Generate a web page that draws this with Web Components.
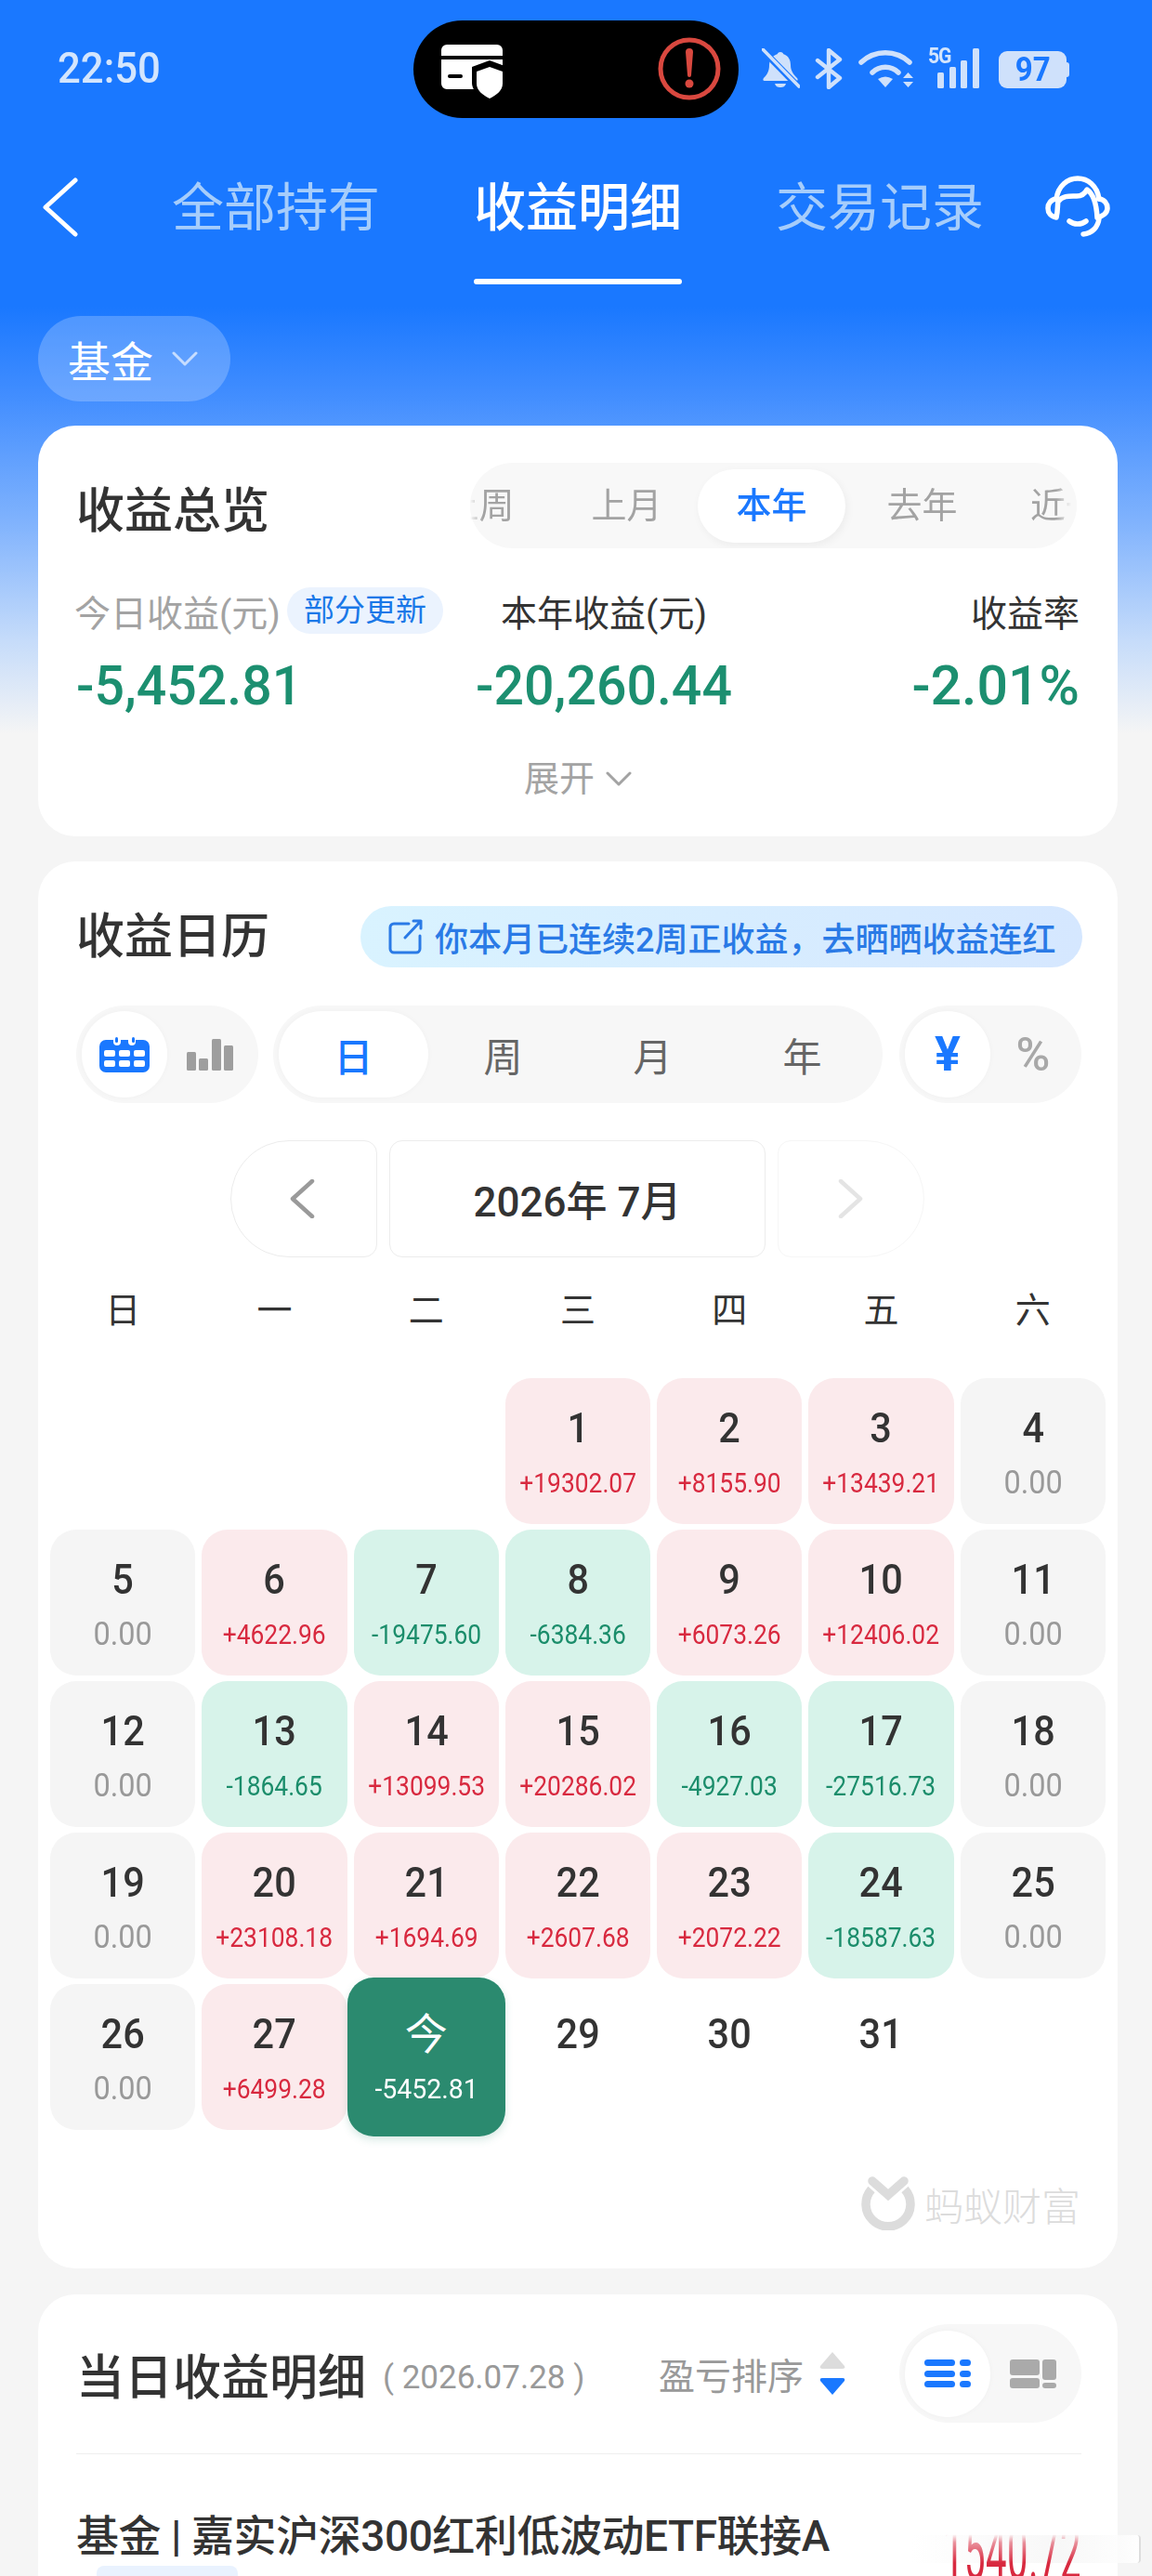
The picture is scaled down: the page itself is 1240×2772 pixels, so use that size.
<!DOCTYPE html>
<html lang="zh-CN">
<head>
<meta charset="UTF-8">
<title>收益明细</title>
<style>
  html, body { margin: 0; padding: 0; }
  body {
    width: 1240px; height: 2772px; overflow: hidden;
    font-family: Roboto, "Noto Sans CJK SC", sans-serif;
    color: #333;
    background: linear-gradient(180deg, #1a78ff 0, #1a78ff 330px, #3f8cff 420px, #7fb2fd 560px, #c6dcfa 690px, #f5f5f5 790px, #f5f5f5 100%);
  }
  main { display: block; padding: 0 37px 0 41px; }
  status-bar, top-nav { margin: 0 -37px 0 -41px; }
</style>
</head>
<body>
<main>
  <status-bar></status-bar>
  <top-nav></top-nav>
  <asset-pill>基金</asset-pill>
  <overview-card></overview-card>
  <calendar-card></calendar-card>
  <detail-card></detail-card>
</main>

<script>
// 状态栏
class StatusBar extends HTMLElement {
  connectedCallback() {
    this.attachShadow({mode: 'open'}).innerHTML = `
    <style>
      :host { display: flex; height: 130px; padding: 22px 0 0 62px; box-sizing: border-box; color: #d3e5fd; }
      .time { width: 383px; font-size: 47px; font-weight: 500; line-height: 47px; margin-top: 27px; color: #d3e5fd; transform: scaleX(.93); transform-origin: 0 0; }
      .island { width: 350px; height: 105px; border-radius: 53px; background: #000; flex: none; }
      .icons { display: flex; margin: 30px 0 0 25px; height: 45px; align-items: flex-start; }
      svg { display: block; flex: none; }
      .signal { position: relative; width: 56px; height: 43px; margin-left: 15px; }
      .signal span { position: absolute; left: 0; top: -1px; font-size: 23px; line-height: 20px; font-weight: 700; letter-spacing: -1.2px; transform: scaleX(.92); transform-origin: 0 0; }
      .battery { position: relative; width: 73px; height: 40px; margin: 3px 0 0 20px; border-radius: 9px; background: #cfe1fb; color: #1a78ff; font-size: 36px; font-weight: 700; line-height: 40px; text-align: center; }
      .battery span { display: inline-block; transform: scaleX(.92); }
      .battery::after { content: ""; position: absolute; left: 73px; top: 12px; width: 3px; height: 16px; border-radius: 0 3px 3px 0; background: #cfe1fb; }
    </style>
    <div class="time">22:50</div>
    <div class="island">
      <svg width="350" height="105" viewBox="0 0 350 105">
        <path d="M36 26h54a6 6 0 0 1 6 6v6H30v-6a6 6 0 0 1 6-6zM30 42h66v32H36a6 6 0 0 1-6-6z" fill="#fff"/>
        <rect x="37" y="58" width="16" height="4" rx="2" fill="#000"/>
        <path d="M82 44l19 7v17c0 9-8 15-19 20-11-5-19-11-19-20V51z" fill="#000" transform="translate(0 -1)"/>
        <path d="M82 50l14 5v13c0 7-6 12-14 16-8-4-14-9-14-16V55z" fill="#fff"/>
        <circle cx="297" cy="52" r="31" fill="none" stroke="#d9483f" stroke-width="5"/>
        <path d="M293 34a4 4 0 0 1 8 0l-2 25a2 2 0 0 1-4 0z" fill="#d9483f"/>
        <circle cx="297" cy="68" r="4.5" fill="#d9483f"/>
      </svg>
    </div>
    <div class="icons">
      <svg width="41" height="43" viewBox="0 0 41 43" fill="#cfe1fb">
        <path d="M20 4c2 0 3 1 3 2 6 2 8 7 8 12 0 6 3 10 7 14 1 1 1 3-1 3H3c-2 0-2-2-1-3 4-4 6-8 6-14 0-5 3-10 9-12 0-1 1-2 3-2z"/>
        <path d="M14 38h12c-1 3-3 4-6 4s-5-1-6-4z"/>
        <path d="M1 2l38 39" stroke="#1a78ff" stroke-width="7"/>
        <path d="M1 1l39 40" stroke="#cfe1fb" stroke-width="3.6" stroke-linecap="round"/>
      </svg>
      <svg width="30" height="44" viewBox="0 0 30 44" fill="none" stroke="#cfe1fb" stroke-width="4.4" stroke-linejoin="round" stroke-linecap="round" style="margin-left:16px">
        <path d="M3 13l24 19-12 10V2l12 10L3 31"/>
      </svg>
      <svg width="60" height="44" viewBox="0 0 60 44" fill="none" stroke="#cfe1fb" stroke-width="5.5" stroke-linecap="round" style="margin-left:17px">
        <path d="M3 15A38 38 0 0 1 55 15"/>
        <path d="M15 26A20 20 0 0 1 43 26"/>
        <path d="M21 33q8-5 16 0l-8 9z" fill="#cfe1fb" stroke="none"/>
        <path d="M48 32l5.500-6 5.500 6zM48 36l5.500 6 5.500-6z" fill="#cfe1fb" stroke="none"/>
      </svg>
      <div class="signal">
        <span>5G</span>
        <svg width="56" height="43" viewBox="0 0 56 43" fill="#cfe1fb">
          <rect x="10" y="26" width="7" height="17" rx="1.5"/>
          <rect x="23" y="20" width="7" height="23" rx="1.5"/>
          <rect x="35" y="13" width="7" height="30" rx="1.5"/>
          <rect x="48" y="0" width="7" height="43" rx="1.5"/>
        </svg>
      </div>
      <div class="battery"><span>97</span></div>
    </div>`;
  }
}
customElements.define('status-bar', StatusBar);

// 顶部导航
class TopNav extends HTMLElement {
  connectedCallback() {
    this.attachShadow({mode: 'open'}).innerHTML = `
    <style>
      :host { display: flex; height: 176px; padding-left: 45px; box-sizing: border-box; align-items: flex-start; }
      svg { display: block; flex: none; }
      .back { margin: 61px 100px 0 0; }
      .tabs { display: flex; gap: 101px; }
      .tab { width: 224px; margin-top: 62px; font-size: 56px; line-height: 64px; text-align: center; color: #a6cdfb; white-space: nowrap; }
      .tab.on { color: #fff; font-weight: 500; }
      .tab.on::after { content: ""; display: block; height: 6px; margin-top: 44px; border-radius: 3px; background: #fff; }
      .help { margin: 59px 0 0 66px; }
    </style>
    <svg class="back" width="40" height="64" viewBox="0 0 40 64" fill="none" stroke="#fff" stroke-width="5" stroke-linecap="round" stroke-linejoin="round"><path d="M36 3L4 32l32 29"/></svg>
    <div class="tabs">
      <div class="tab">全部持有</div>
      <div class="tab on">收益明细</div>
      <div class="tab">交易记录</div>
    </div>
    <svg class="help" width="70" height="66" viewBox="0 0 70 66" fill="none" stroke="#fff" stroke-width="5.5" stroke-linecap="round" stroke-linejoin="round">
      <path d="M12 25C14 11 24 3 35 3s21 8 23 22"/>
      <path d="M12 25c-6 1-9 5-9 10s3 9 9 10c2-8 1-14 2-17 5-7 13-6 20-6 5 0 9-3 11-7 6 4 10 12 11 30 6-1 11-5 11-10s-3-9-9-10"/>
      <path d="M26 49c5 4 13 4 18 0"/>
      <path d="M58 46c-1 9-7 16-17 17"/>
    </svg>`;
  }
}
customElements.define('top-nav', TopNav);

// 基金下拉
class AssetPill extends HTMLElement {
  connectedCallback() {
    this.attachShadow({mode: 'open'}).innerHTML = `
    <style>
      :host { display: flex; align-items: center; width: 207px; height: 92px; margin-top: 34px; padding-left: 32px; box-sizing: border-box; border-radius: 46px; background: rgba(255,255,255,.22); color: #fff; font-size: 46px; }
      svg { margin-left: 20px; }
    </style>
    <slot></slot>
    <svg width="28" height="16" viewBox="0 0 28 16" fill="none" stroke="#c6ddff" stroke-width="3" stroke-linecap="round" stroke-linejoin="round"><path d="M2 2l12 12L26 2"/></svg>`;
  }
}
customElements.define('asset-pill', AssetPill);

// 灰底切换组
class ToggleGroup extends HTMLElement {
  connectedCallback() {
    this.attachShadow({mode: 'open'}).innerHTML = `
    <style>
      :host { display: flex; align-items: center; height: 105px; padding: 0 6px; box-sizing: border-box; border-radius: 53px; background: #f7f7f7; flex: none; }
    </style>
    <slot></slot>`;
  }
}
customElements.define('toggle-group', ToggleGroup);

class ToggleItem extends HTMLElement {
  connectedCallback() {
    this.attachShadow({mode: 'open'}).innerHTML = `
    <style>
      :host { display: flex; align-items: center; justify-content: center; width: 92px; height: 93px; border-radius: 47px; color: #666; font-size: 42px; flex: none; }
      :host([on]) { background: #fff; color: #1a78ff; font-weight: 500; box-shadow: 0 0 6px rgba(0,0,0,.03); }
    </style>
    <slot></slot>`;
  }
}
customElements.define('toggle-item', ToggleItem);

// 收益总览
class OverviewCard extends HTMLElement {
  connectedCallback() {
    const periods = ['上周', '上月', '本年', '去年', '近一年'];
    this.attachShadow({mode: 'open'}).innerHTML = `
    <style>
      :host { display: block; height: 442px; margin-top: 26px; padding: 40px 41px 0; box-sizing: border-box; border-radius: 40px; background: #fff; }
      .head { display: flex; justify-content: space-between; align-items: center; margin-right: 3px; }
      h2 { margin: 14px 0 0; font-size: 52px; line-height: 72px; font-weight: 500; color: #333; }
      .seg { width: 653px; height: 92px; border-radius: 46px; background: #f8f8f8; }
      .clip { height: 92px; overflow: hidden;
              -webkit-mask-image: linear-gradient(90deg, transparent 0, #000 14px, #000 calc(100% - 22px), transparent calc(100% - 6px)); }
      .list { display: flex; align-items: center; height: 92px; margin-left: -70px; }
      .list div { width: 159px; height: 79px; line-height: 79px; flex: none; text-align: center; font-size: 38px; color: #a3a3a3; border-radius: 40px; white-space: nowrap; }
      .list .on { background: #fff; color: #1a78ff; font-weight: 500; box-shadow: 2px 3px 10px rgba(0,0,0,.05); margin-left: -3px; margin-right: 3px; }
      .list .last { padding-left: 37px; text-align: left; box-sizing: border-box; }
      .stats { display: grid; grid-template-columns: 418px 300px 1fr; margin-top: 42px; }
      .label { display: flex; align-items: center; height: 50px; font-size: 39px; color: #333; white-space: nowrap; }
      .label.muted { color: #a3a3a3; margin-left: -2px; }
      .mid { justify-content: center; }
      .end { justify-content: flex-end; }
      .tag { height: 50px; margin-left: 7px; padding: 0 18px; border-radius: 25px; background: #ebf3fe; color: #1a78e8; font-size: 33px; line-height: 50px; }
      .val { margin-top: 26px; height: 60px; font-size: 59px; line-height: 60px; font-weight: 500; color: #1c8f70; white-space: nowrap; }
      .more { display: flex; align-items: center; justify-content: center; gap: 12px; margin-top: 45px; font-size: 38px; line-height: 50px; color: #a3a3a3; }
    </style>
    <div class="head">
      <h2>收益总览</h2>
      <div class="seg"><div class="clip"><div class="list">
        ${periods.map(p => `<div class="${p == '本年' ? 'on' : p == '近一年' ? 'last' : ''}">${p}</div>`).join('')}
      </div></div></div>
    </div>
    <div class="stats">
      <div class="label muted">今日收益(元)<span class="tag">部分更新</span></div>
      <div class="label mid">本年收益(元)</div>
      <div class="label end">收益率</div>
      <div class="val" style="transform:scaleX(.97);transform-origin:0 0">-5,452.81</div>
      <div class="val" style="text-align:center;transform:scaleX(.97)">-20,260.44</div>
      <div class="val" style="text-align:right">-2.01%</div>
    </div>
    <div class="more">展开<svg width="28" height="16" viewBox="0 0 28 16" fill="none" stroke="#a3a3a3" stroke-width="3" stroke-linecap="round" stroke-linejoin="round"><path d="M2 2l12 12L26 2"/></svg></div>`;
  }
}
customElements.define('overview-card', OverviewCard);

// 日历格子
class DayCell extends HTMLElement {
  connectedCallback() {
    const day = this.getAttribute('day');
    const amount = this.getAttribute('amount');
    this.attachShadow({mode: 'open'}).innerHTML = `
    <style>
      :host { display: block; height: 157px; border-radius: 28px; text-align: center; color: #333; box-sizing: border-box; padding-top: 32px; }
      .num { font-size: 45px; line-height: 44px; font-weight: 500; transform: scaleX(.92); }
      .amt { margin-top: 17px; font-size: 30px; line-height: 40px; white-space: nowrap; transform: scaleX(.88); }
      :host([kind=up]) { background: #fbeaec; }
      :host([kind=up]) .amt { color: #d8293f; }
      :host([kind=down]) { background: #d7f3ea; }
      :host([kind=down]) .amt { color: #1b8d6b; }
      :host([kind=flat]) { background: #f5f5f5; }
      :host([kind=flat]) .amt { color: #999; font-size: 35px; transform: scaleX(.93); }
      :host([kind=today]) { margin: -7px; height: 171px; padding-top: 39px; background: #2b8a6f; color: #fff; box-shadow: 0 4px 8px rgba(43,138,111,.18); position: relative; z-index: 1; }
      :host([kind=today]) .num { font-weight: 400; font-size: 46px; transform: none; }
      :host([kind=today]) .amt { transform: scaleX(.95); }
    </style>
    <div class="num">${day}</div>
    ${amount ? `<div class="amt">${amount}</div>` : ''}`;
  }
}
customElements.define('day-cell', DayCell);

// 蚂蚁财富水印
class AntLogo extends HTMLElement {
  connectedCallback() {
    this.attachShadow({mode: 'open'}).innerHTML = `
    <style>
      :host { display: flex; align-items: center; justify-content: flex-end; gap: 10px; height: 58px; color: #dcdcdc; font-size: 42px; font-weight: 300; }
      svg { display: block; }
    </style>
    <svg width="58" height="58" viewBox="0 0 58 58" fill="none" stroke="#dcdcdc" stroke-width="9.5">
      <path d="M11 14A24 24 0 1 0 47 14"/>
      <path d="M12 5l17 15L46 5" stroke-linecap="round"/>
    </svg>
    <span>蚂蚁财富</span>`;
  }
}
customElements.define('ant-logo', AntLogo);

// 收益日历
class CalendarCard extends HTMLElement {
  connectedCallback() {
    const days = [
      [], [], [],
      ['1', '+19302.07'], ['2', '+8155.90'], ['3', '+13439.21'], ['4', '0.00'],
      ['5', '0.00'], ['6', '+4622.96'], ['7', '-19475.60'], ['8', '-6384.36'], ['9', '+6073.26'], ['10', '+12406.02'], ['11', '0.00'],
      ['12', '0.00'], ['13', '-1864.65'], ['14', '+13099.53'], ['15', '+20286.02'], ['16', '-4927.03'], ['17', '-27516.73'], ['18', '0.00'],
      ['19', '0.00'], ['20', '+23108.18'], ['21', '+1694.69'], ['22', '+2607.68'], ['23', '+2072.22'], ['24', '-18587.63'], ['25', '0.00'],
      ['26', '0.00'], ['27', '+6499.28'], ['今', '-5452.81', 'today'], ['29'], ['30'], ['31']
    ];
    const kind = d => d[2] || (!d[1] ? '' : d[1] == '0.00' ? 'flat' : d[1][0] == '+' ? 'up' : 'down');
    this.attachShadow({mode: 'open'}).innerHTML = `
    <style>
      :host { display: block; height: 1514px; margin-top: 27px; padding-top: 48px; box-sizing: border-box; border-radius: 40px; background: #fff; }
      .head { display: flex; justify-content: space-between; align-items: center; padding: 0 38px 0 41px; height: 66px; }
      h2 { margin: -10px 0 0; font-size: 52px; font-weight: 500; color: #333; }
      .banner { display: flex; align-items: center; gap: 12px; height: 66px; padding: 0 28px 0 30px; box-sizing: border-box; width: 777px; border-radius: 33px; background: linear-gradient(90deg, #d9f3ff, #d5e7ff); color: #2a7ae6; font-size: 36px; font-weight: 500; white-space: nowrap; }
      .controls { display: flex; margin: 41px 0 0 41px; }
      .nav { display: flex; justify-content: flex-start; gap: 13px; margin: 40px 0 0 207px; height: 126px; }
      .nav div { box-sizing: border-box; border: 1.5px solid #ececec; height: 126px; border-radius: 14px; display: flex; align-items: center; justify-content: center; }
      .prev { width: 158px; border-radius: 63px 14px 14px 63px !important; justify-content: flex-start !important; padding-left: 62px; }
      .month { width: 405px; font-size: 44px; font-weight: 500; color: #333; }
      .next { width: 158px; border-radius: 14px 63px 63px 14px !important; border-color: #f6f6f6 !important; justify-content: flex-start !important; padding-left: 64px; }
      .week { display: grid; grid-template-columns: repeat(7, 1fr); gap: 7px; margin: 37px 13px 0; height: 40px; line-height: 40px; text-align: center; font-size: 38px; color: #333; }
      .grid { display: grid; grid-template-columns: repeat(7, 1fr); gap: 6px 7px; margin: 53px 13px 0; }
      ant-logo { margin: 50px 40px 0 0; }
      svg { display: block; flex: none; }
    </style>
    <div class="head">
      <h2>收益日历</h2>
      <div class="banner">
        <svg width="38" height="38" viewBox="0 0 38 38" fill="none" stroke="#2a7ae6" stroke-width="3" stroke-linecap="round" stroke-linejoin="round"><path d="M22 5H6a4 4 0 0 0-4 4v23a4 4 0 0 0 4 4h24a4 4 0 0 0 4-4V18M18 20L35 2M27 2h8v8"/></svg>
        <span>你本月已连续2周正收益，去晒晒收益连红</span>
      </div>
    </div>
    <div class="controls">
      <toggle-group>
        <toggle-item on>
          <svg width="54" height="38" viewBox="0 0 54 38"><path d="M7 3h8v2a4 4 0 0 0 8 0V3h8v2a4 4 0 0 0 8 0V3h8a7 7 0 0 1 7 7v21a7 7 0 0 1-7 7H7a7 7 0 0 1-7-7V10a7 7 0 0 1 7-7z" fill="#1a78ff"/><g fill="#fff"><rect x="5" y="14" width="12" height="7" rx="2"/><rect x="21" y="14" width="12" height="7" rx="2"/><rect x="37" y="14" width="12" height="7" rx="2"/><rect x="5" y="25" width="12" height="7" rx="2"/><rect x="21" y="25" width="12" height="7" rx="2"/><rect x="37" y="25" width="12" height="7" rx="2"/></g><rect x="17" y="0" width="3" height="6" rx="1.5" fill="#1a78ff"/><rect x="35" y="0" width="3" height="6" rx="1.5" fill="#1a78ff"/></svg>
        </toggle-item>
        <toggle-item>
          <svg width="50" height="34" viewBox="0 0 50 34" fill="#9e9e9e"><rect x="0" y="14" width="10" height="20" rx="1.5"/><rect x="13" y="21" width="10" height="13" rx="1.5"/><rect x="27" y="0" width="10" height="34" rx="1.5"/><rect x="40" y="7" width="10" height="27" rx="1.5"/></svg>
        </toggle-item>
      </toggle-group>
      <toggle-group style="margin-left:16px">
        <toggle-item on style="width:161px">日</toggle-item>
        <toggle-item style="width:161px">周</toggle-item>
        <toggle-item style="width:161px">月</toggle-item>
        <toggle-item style="width:161px">年</toggle-item>
      </toggle-group>
      <toggle-group style="margin-left:18px">
        <toggle-item on style="font-weight:700;font-size:52px">¥</toggle-item>
        <toggle-item style="color:#a8a8a8;font-weight:500;font-size:50px">%</toggle-item>
      </toggle-group>
    </div>
    <div class="nav">
      <div class="prev"><svg width="28" height="42" viewBox="0 0 28 42" fill="none" stroke="#9a9a9a" stroke-width="4.500" stroke-linecap="round" stroke-linejoin="round"><path d="M25 2L4 21l21 19"/></svg></div>
      <div class="month">2026年 7月</div>
      <div class="next"><svg width="28" height="42" viewBox="0 0 28 42" fill="none" stroke="#e4e4e4" stroke-width="4.500" stroke-linecap="round" stroke-linejoin="round"><path d="M3 2l21 19L3 40"/></svg></div>
    </div>
    <div class="week">${['日','一','二','三','四','五','六'].map(w => `<span>${w}</span>`).join('')}</div>
    <div class="grid">
      ${days.map(d => d.length ? `<day-cell day="${d[0]}" ${d[1] ? `amount="${d[1]}"` : ''} kind="${kind(d)}"></day-cell>` : '<span></span>').join('')}
    </div>
    <ant-logo></ant-logo>`;
  }
}
customElements.define('calendar-card', CalendarCard);

// 当日收益明细
class DetailCard extends HTMLElement {
  connectedCallback() {
    this.attachShadow({mode: 'open'}).innerHTML = `
    <style>
      :host { display: block; height: 340px; margin-top: 28px; padding: 32px 39px 0 41px; box-sizing: border-box; border-radius: 40px 40px 0 0; background: #fff; position: relative; }
      .head { display: flex; align-items: center; height: 106px; }
      h2 { margin: 0; font-size: 52px; font-weight: 500; color: #333; white-space: nowrap; }
      .date { margin: 8px 0 0 18px; width: 297px; font-size: 35px; color: #999; white-space: nowrap; }
      .sort { font-size: 39px; color: #999; white-space: nowrap; }
      .arrows { margin: 0 0 0 17px; }
      toggle-group { height: 106px; margin-left: auto; }
      hr { margin: 33px 0 0; border: 0; border-top: 1.5px solid #eee; }
      .name { margin-top: 58px; font-size: 46px; line-height: 60px; font-weight: 500; color: #333; white-space: nowrap; letter-spacing: -.45px; }
      .tag { width: 152px; height: 44px; margin: 2px 0 0 22px; border-radius: 8px; background: #e9f2fe; }
      .ghost { position: absolute; left: 939px; top: 259px; width: 248px; height: 30px; box-sizing: border-box; background: linear-gradient(90deg, rgba(255,255,255,0), rgba(238,238,238,.45) 65%, rgba(255,255,255,.9)); border-right: 2px solid #ddd; border-radius: 4px; }
      .profit { position: absolute; left: 974px; top: 223px; height: 50px; font-size: 40px; line-height: 50px; color: #d8293f; transform: scaleY(2.2); transform-origin: 0 0; letter-spacing: .5px;
                -webkit-mask-image: linear-gradient(180deg, transparent 32%, rgba(0,0,0,.5) 40%, #000 60%); }
      svg { display: block; flex: none; }
    </style>
    <div class="head">
      <h2>当日收益明细</h2>
      <span class="date">( 2026.07.28 )</span>
      <span class="sort">盈亏排序</span>
      <svg class="arrows" width="28" height="46" viewBox="0 0 28 46"><path d="M14 0l13 15q1 3-2 3H3q-3 0-2-3z" fill="#dcdcdc"/><path d="M14 46L1 31q-1-3 2-3h22q3 0 2 3z" fill="#1a78ff"/></svg>
      <toggle-group>
        <toggle-item on>
          <svg width="50" height="30" viewBox="0 0 50 30" fill="#1a78ff"><rect x="0" y="0" width="33" height="7" rx="3.5"/><rect x="38" y="0" width="12" height="7" rx="3.5"/><rect x="0" y="12" width="33" height="7" rx="3.5"/><rect x="38" y="12" width="12" height="7" rx="3.5"/><rect x="0" y="23" width="33" height="7" rx="3.5"/><rect x="38" y="23" width="12" height="7" rx="3.5"/></svg>
        </toggle-item>
        <toggle-item>
          <svg width="50" height="31" viewBox="0 0 50 31" fill="#aaa"><rect x="0" y="0" width="32" height="17" rx="3"/><rect x="0" y="20" width="32" height="11" rx="3"/><rect x="35" y="0" width="15" height="22" rx="3"/><rect x="35" y="25" width="15" height="6" rx="3"/></svg>
        </toggle-item>
      </toggle-group>
    </div>
    <hr>
    <div class="name">基金 | 嘉实沪深300红利低波动ETF联接A</div>
    <div class="tag"></div>
    <div class="ghost"></div>
    <div class="profit">1540.72</div>`;
  }
}
customElements.define('detail-card', DetailCard);
</script>
</body>
</html>
